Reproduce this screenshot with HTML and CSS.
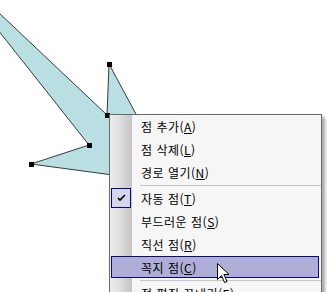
FILE: index.html
```html
<!DOCTYPE html>
<html lang="ko">
<head>
    <meta charset="UTF-8">
    <title>점 편집</title>
    <link rel="stylesheet" href="styles.css">
</head>
<body>
    <div class="stage">
        <svg class="canvas" width="327" height="292" viewBox="0 0 327 292">
            <polygon class="shape" points="-2,12 107,115 109,64 150,140 150,180 31,164 89,145 -2,30"/>
            <rect class="node" x="107" y="62" width="5" height="5"/>
            <rect class="node" x="105" y="113" width="5" height="5"/>
            <rect class="node" x="87" y="143" width="5" height="5"/>
            <rect class="node" x="29" y="162" width="5" height="5"/>
        </svg>

        <div class="menu">
            <div class="item"><span class="label">점 추가(<u>A</u>)</span></div>
            <div class="item"><span class="label">점 삭제(<u>L</u>)</span></div>
            <div class="item"><span class="label">경로 열기(<u>N</u>)</span></div>
            <div class="sep"></div>
            <div class="item checked">
                <span class="check">
                    <svg width="9" height="8" viewBox="0 0 9 8"><path d="M1 4 L3 6 L8 1" fill="none" stroke="#000" stroke-width="1.6"/></svg>
                </span>
                <span class="label">자동 점(<u>T</u>)</span>
            </div>
            <div class="item"><span class="label">부드러운 점(<u>S</u>)</span></div>
            <div class="item"><span class="label">직선 점(<u>R</u>)</span></div>
            <div class="item active"><span class="label">꼭지 점(<u>C</u>)</span></div>
            <div class="sep"></div>
            <div class="item"><span class="label">점 편집 끝내기(<u>E</u>)</span></div>
        </div>

        <svg class="cursor" width="14" height="22" viewBox="0 0 14 22">
            <path d="M0.5 0.5 L0.5 16.5 L4.5 12.5 L7.5 19.5 L10 18.5 L7 11.5 L12 11.5 Z" fill="#fff" stroke="#000" stroke-width="1"/>
        </svg>
    </div>
</body>
</html>
```

FILE: styles.css
```css
body {
    margin: 0;
    background: #fff;
    font-family: "Noto Sans CJK KR", "Noto Sans", sans-serif;
}
.stage {
    position: relative;
    width: 327px;
    height: 292px;
    overflow: hidden;
}
.canvas {
    position: absolute;
    left: 0;
    top: 0;
}
.shape {
    fill: #b9dfe3;
    stroke: #3a3a3a;
    stroke-width: 1;
}
.node {
    fill: #000;
}
.menu {
    position: absolute;
    left: 109px;
    top: 114px;
    width: 211px;
    height: 200px;
    border: 1px solid #6a6a6a;
    background: linear-gradient(to right, #ececec 0, #e2e2e2 8px, #c4c4c4 22px, #f6f6f6 22px);
    box-shadow: 3px 3px 3px rgba(0, 0, 0, 0.35);
}
.item {
    position: relative;
    height: 23px;
    display: flex;
    align-items: center;
    font-size: 12px;
    letter-spacing: 0.5px;
    color: #000;
}
.label {
    padding-left: 31px;
    white-space: nowrap;
}
.sep {
    margin-left: 30px;
    margin-top: 1px;
    height: 2px;
    border-top: 1px solid #c5c5c5;
    box-sizing: border-box;
}
.check {
    position: absolute;
    left: 1px;
    top: 1px;
    width: 20px;
    height: 20px;
    box-sizing: border-box;
    border: 1px solid #0a0a80;
    background: #d6d6ea;
    display: flex;
    align-items: center;
    justify-content: center;
}
.active::before {
    content: "";
    position: absolute;
    left: 1px;
    right: 2px;
    top: 0;
    bottom: 1px;
    border: 1px solid #0a0a80;
    background: #aeaed6;
}
.active .label {
    position: relative;
}
.cursor {
    position: absolute;
    left: 217px;
    top: 263px;
}
```
